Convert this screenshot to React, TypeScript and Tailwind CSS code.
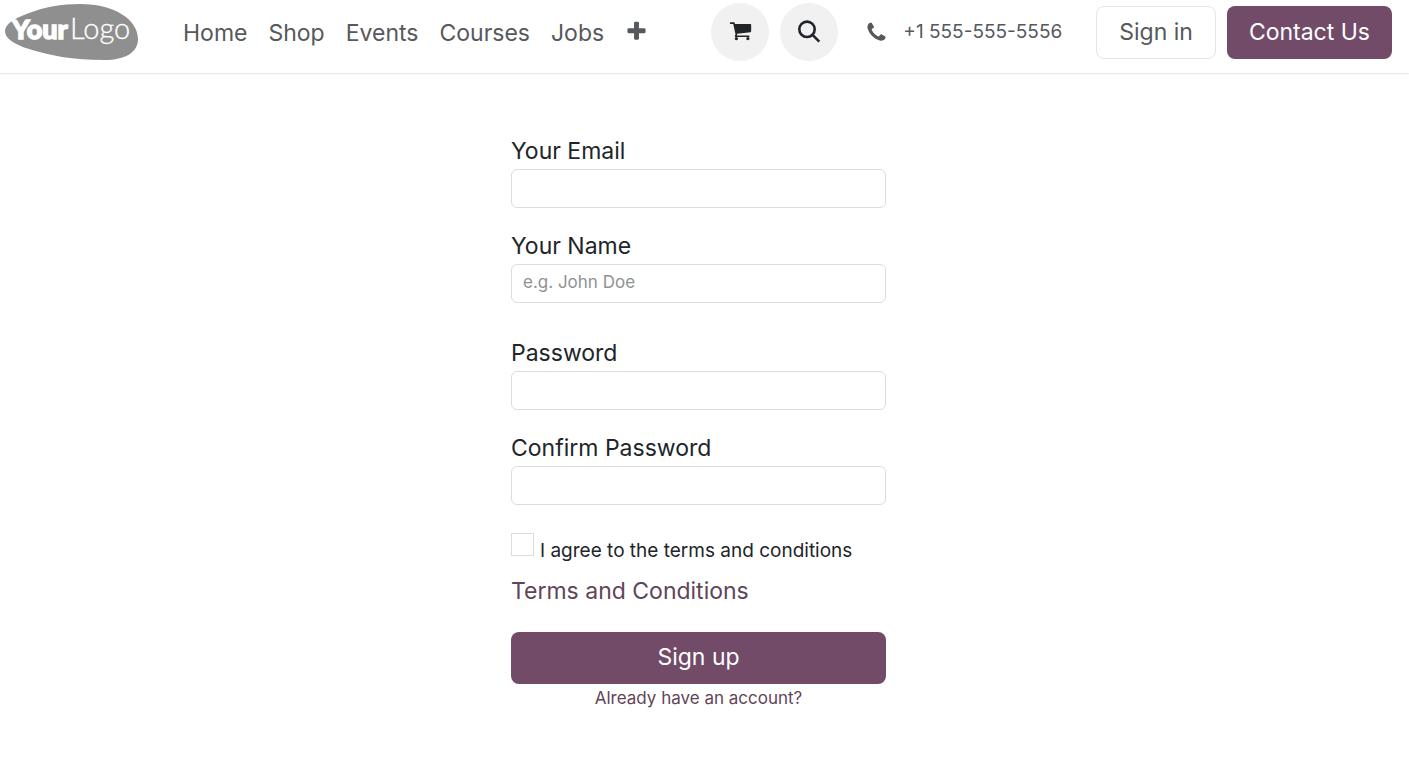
import React from "react";

const navLinks = ["Home", "Shop", "Events", "Courses", "Jobs"];

const PLUS =
  "M1600 736v192q0 40-28 68t-68 28h-416v416q0 40-28 68t-68 28h-192q-40 0-68-28t-28-68v-416h-416q-40 0-68-28t-28-68v-192q0-40 28-68t68-28h416v-416q0-40 28-68t68-28h192q40 0 68 28t28 68v416h416q40 0 68 28t28 68z";
const CART =
  "M704 1536q0 52-38 90t-90 38-90-38-38-90 38-90 90-38 90 38 38 90zm896 0q0 52-38 90t-90 38-90-38-38-90 38-90 90-38 90 38 38 90zm128-1088v512q0 24-16.500 42.500t-40.500 21.500l-1044 122q13 60 13 70 0 16-24 64h920q26 0 45 19t19 45-19 45-45 19h-1024q-26 0-45-19t-19-45q0-11 8-31.500t16-36 21.500-40 15.500-29.500l-177-823h-204q-26 0-45-19t-19-45 19-45 45-19h256q16 0 28.500 6.500t19.500 15.500 13 24.500 8 26 5.500 29.500 4.500 26h1201q26 0 45 19t19 45z";
const PHONE =
  "M1600 1240q0 27-10 70.500t-21 68.500q-21 50-122 106-94 51-186 51-27 0-53-3.500t-57.500-12.500-47-14.500-55.500-20.500-49-18q-98-35-175-83-127-79-264-216t-216-264q-48-77-83-175-3-9-18-49t-20.500-55.500-14.500-47-12.500-57.500-3.500-53q0-92 51-186 56-101 106-122 25-11 68.500-21t70.500-10q14 0 21 3 18 6 53 76 11 19 30 54t35 63.500 31 53.500q3 4 17.500 25t21.500 35.500 7 28.500q0 20-28.500 50t-62 55-62 53-28.500 46q0 9 5 22.500t8.500 20.500 14 24 11.500 19q76 137 174 235t235 174q2 1 19 11.500t24 14 20.500 8.500 22.500 5q18 0 46-28.500t53-62 55-62 50-28.500q14 0 28.500 7t35.500 21.500 25 17.500q25 15 53.500 31t63.500 35 54 30q70 35 76 53 3 7 3 21z";

function Glyph({ d, className }: { d: string; className: string }) {
  return (
    <svg viewBox="0 0 1792 1792" fill="currentColor" aria-hidden="true" className={className}>
      <path d={d} />
    </svg>
  );
}

function Logo() {
  return (
    <svg viewBox="0 0 134 56" className="h-14 w-[134px]" role="img" aria-label="Your Logo">
      <path
        d="M0 27C0 20 10 14 24 9C40 3 56 0 75 0C110 0 133 16 133 35C133 48 121 56 99 56C84 56 70 55 57 53C32 48 0 41 0 27Z"
        fill="#8f8f8f"
      />
      <text
        x="7"
        y="35"
        fontSize="27"
        fontFamily="Lato, sans-serif"
        fontWeight="900"
        fill="#fff"
        stroke="#fff"
        strokeWidth="1.400"
      >
        Your
      </text>
      <text
        x="65"
        y="35"
        fontSize="29"
        fontFamily="Lato, sans-serif"
        fontWeight="300"
        fill="#fff"
        stroke="#fff"
        strokeWidth="0.300"
      >
        Logo
      </text>
    </svg>
  );
}

function Field({
  id,
  label,
  type,
  placeholder,
}: {
  id: string;
  label: string;
  type: string;
  placeholder?: string;
}) {
  return (
    <div className="flex flex-col gap-[2px]">
      <label htmlFor={id} className="text-[23px] leading-8">
        {label}
      </label>
      <input
        id={id}
        type={type}
        placeholder={placeholder}
        className="h-[39px] w-full rounded-md border border-[#dadde0] px-[11px] pb-1 text-[17px] outline-none placeholder:text-[#8f9193]"
      />
    </div>
  );
}

export default function App() {
  return (
    <div className="min-h-screen bg-white font-['Inter',sans-serif] text-[#212529]">
      <header className="flex h-[74px] items-start border-b border-[#ebebeb] pr-[17px] pl-[5px] text-[#56595c] shadow-[0_1px_2px_rgba(0,0,0,0.04)]">
        <a href="#home" className="mt-1 shrink-0">
          <Logo />
        </a>
        <nav className="ml-11 flex h-[66px] items-center gap-[21px] text-[23px]">
          {navLinks.map((name) => (
            <a key={name} href={`#${name.toLowerCase()}`}>
              {name}
            </a>
          ))}
          <button type="button" aria-label="More" className="pb-1">
            <Glyph d={PLUS} className="size-[23px]" />
          </button>
        </nav>
        <div className="ml-auto flex h-16 items-center">
          <a
            href="#cart"
            aria-label="Cart"
            className="flex size-[58px] items-center justify-center rounded-full bg-[#f1f1f1] pb-1 text-[#212529]"
          >
            <Glyph d={CART} className="size-[23px]" />
          </a>
          <button
            type="button"
            aria-label="Search"
            className="ml-[11px] flex size-[58px] items-center justify-center rounded-full bg-[#f1f1f1] text-[#212529]"
          >
            <svg
              viewBox="0 0 24 24"
              fill="none"
              stroke="currentColor"
              strokeWidth="2.6"
              aria-hidden="true"
              className="size-6"
            >
              <circle cx="10" cy="9.300" r="7.700" />
              <path d="M15.300 14.700L22.300 21.700" />
            </svg>
          </button>
          <a href="tel:+15555555556" className="ml-[27px] flex items-center gap-[15px] text-[19px]">
            <Glyph d={PHONE} className="size-[23px]" />
            <span>+1 555-555-5556</span>
          </a>
          <a
            href="#signin"
            className="ml-[34px] flex h-[53px] items-center rounded-lg border border-[#e3e5e7] px-[22px] text-[23px]"
          >
            Sign in
          </a>
          <a
            href="#contact"
            className="ml-[11px] flex h-[53px] items-center rounded-lg bg-[#714b67] px-[22px] text-[23px] text-white"
          >
            Contact Us
          </a>
        </div>
      </header>

      <main className="flex justify-center pt-[61px] pr-3">
        <form className="flex w-full max-w-[375px] flex-col" onSubmit={(e) => e.preventDefault()}>
          <div className="flex flex-col gap-[22px]">
            <Field id="email" label="Your Email" type="email" />
            <Field id="name" label="Your Name" type="text" placeholder="e.g. John Doe" />
          </div>
          <div className="mt-[34px] flex flex-col gap-[22px]">
            <Field id="password" label="Password" type="password" />
            <Field id="confirm" label="Confirm Password" type="password" />
          </div>
          <div className="mt-7 flex items-start gap-[6px]">
            <input
              id="agree"
              type="checkbox"
              className="size-[23px] appearance-none border border-[#dadde0] bg-white checked:bg-[#714b67]"
            />
            <label htmlFor="agree" className="pt-1 text-[19px] leading-7">
              I agree to the terms and conditions
            </label>
          </div>
          <a href="#terms" className="mt-[9px] self-start text-[23px] leading-[34px] text-[#5f4558]">
            Terms and Conditions
          </a>
          <button
            type="submit"
            className="mt-6 h-[52px] rounded-lg bg-[#714b67] pb-[2px] text-[23px] text-white"
          >
            Sign up
          </button>
          <a href="#login" className="self-center text-[17px] leading-7 text-[#5f4558]">
            Already have an account?
          </a>
        </form>
      </main>
    </div>
  );
}
